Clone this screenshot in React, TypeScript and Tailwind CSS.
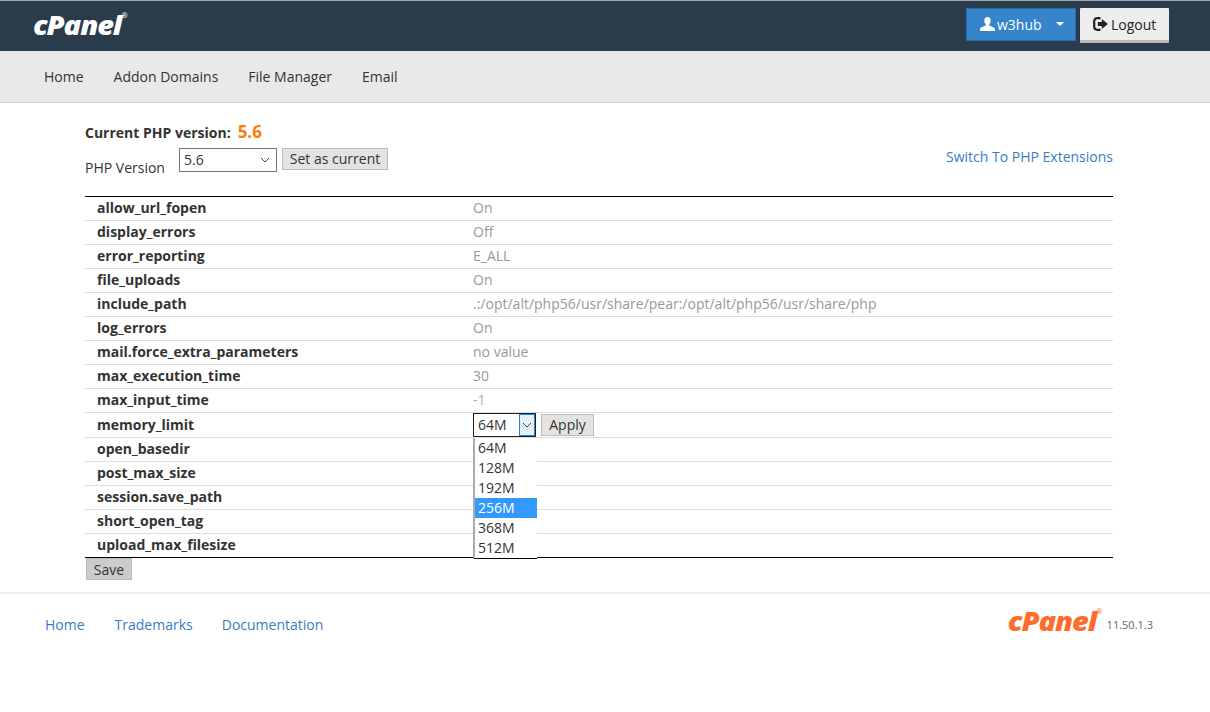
import React from 'react';

const settings = [
  { name: 'allow_url_fopen', value: 'On' },
  { name: 'display_errors', value: 'Off' },
  { name: 'error_reporting', value: 'E_ALL' },
  { name: 'file_uploads', value: 'On' },
  { name: 'include_path', value: '.:/opt/alt/php56/usr/share/pear:/opt/alt/php56/usr/share/php' },
  { name: 'log_errors', value: 'On' },
  { name: 'mail.force_extra_parameters', value: 'no value' },
  { name: 'max_execution_time', value: '30' },
  { name: 'max_input_time', value: '-1' },
  { name: 'memory_limit', value: '' },
  { name: 'open_basedir', value: '' },
  { name: 'post_max_size', value: '' },
  { name: 'session.save_path', value: '' },
  { name: 'short_open_tag', value: '' },
  { name: 'upload_max_filesize', value: '' },
];

const memoryOptions = ['64M', '128M', '192M', '256M', '368M', '512M'];

const Chevron: React.FC = () => (
  <svg width="10" height="6" viewBox="0 0 10 6" fill="none" stroke="#444" strokeWidth="1">
    <path d="M1 1l4 4 4-4" />
  </svg>
);

const UserIcon: React.FC = () => (
  <svg width="15" height="15" viewBox="0 0 15 15" fill="#fff">
    <path d="M7.500 0C5.400 0 4.300 1.500 4.300 3.600c0 1.500.6 3 1.500 3.900v1.100C4.200 9.500.3 10.300 0 12.200V14h15v-1.800c-.3-1.900-4.200-2.700-5.800-3.600V7.500c.9-.9 1.500-2.400 1.500-3.900C10.700 1.500 9.600 0 7.500 0z" />
  </svg>
);

const LogoutIcon: React.FC = () => (
  <svg width="15" height="14" viewBox="0 0 15 14" fill="none">
    <path d="M7.500 1.200H4.200C2.400 1.200 1.200 2.500 1.200 4.200v5.600c0 1.700 1.200 3 3 3h3.300" stroke="#222" strokeWidth="2.200" />
    <path d="M4.800 5h4V2L14.800 7l-6 5V9h-4z" fill="#222" />
  </svg>
);

const App: React.FC = () => {
  return (
    <div className="min-h-[712px] bg-white font-['Open_Sans',sans-serif] text-[14px] text-[#333]">
      <header className="flex h-[51px] items-center justify-between border-t border-[#aaa] bg-[#2a3b4c] pl-[33px] pr-[41px]">
        <span className="mt-[-2px] flex origin-left scale-x-[1.12] items-start text-[26px] leading-none font-extrabold tracking-[-1px] text-white italic">
          cPanel<span className="text-[7px] font-normal tracking-normal not-italic">®</span>
        </span>
        <div className="mt-[-2px] flex items-start gap-1">
          <button className="flex h-[33px] w-[110px] items-center gap-[2px] border border-[#2e6da4] bg-[#3584cc] pl-[13px] text-white">
            <UserIcon />
            <span>w3hub</span>
            <span className="ml-[12px] h-0 w-0 border-x-[4px] border-t-[4px] border-x-transparent border-t-white" />
          </button>
          <button className="flex h-[35px] w-[89px] items-center gap-[3px] rounded-[1px] border-b-[3px] border-[#bbb] bg-[#eee] pt-[1px] pl-[13px] text-[#222]">
            <LogoutIcon />
            <span>Logout</span>
          </button>
        </div>
      </header>

      <nav className="flex h-[52px] items-center gap-[30px] border-b border-[#ccc] bg-[#e9e9e9] pl-[44px]">
        <a>Home</a>
        <a>Addon Domains</a>
        <a>File Manager</a>
        <a>Email</a>
      </nav>

      <main className="mx-[85px] w-[1028px]">
        <div className="flex items-start justify-between">
          <div>
            <div className="mt-[17px] flex h-[24px] items-center gap-[7px]">
              <span className="font-bold">Current PHP version:</span>
              <span className="text-[17px] font-bold text-[#ff7c0a]">5.6</span>
            </div>
            <div className="mt-[4px] flex items-start">
              <span className="mt-[9px] w-[94px]">PHP Version</span>
              <div className="flex h-[24px] w-[98px] items-center justify-between border border-[#767676] pr-[6px] pl-[4px]">
                <span className="mb-[1px]">5.6</span>
                <Chevron />
              </div>
              <button className="ml-[5px] h-[22px] w-[106px] border border-[#bbb] bg-[#e3e3e3] leading-[20px]">
                Set as current
              </button>
            </div>
          </div>
          <a className="mt-[43px] text-[#3a7cc4]">Switch To PHP Extensions</a>
        </div>

        <div className="mt-[18px] border-y border-black">
          {settings.map((row, i) => (
            <div
              key={row.name}
              className={`flex items-center border-[#ddd] pl-[12px] ${i > 0 ? 'border-t' : ''} ${row.name === 'memory_limit' ? 'h-[25px]' : i === 0 ? 'h-[23px]' : 'h-[24px]'}`}
            >
              <span className="mb-[2px] w-[376px] font-bold">{row.name}</span>
              {row.name === 'memory_limit' ? (
                <div className="relative flex items-center">
                  <div className="flex h-[24px] w-[63px] items-stretch border border-[#222]">
                    <span className="flex-1 pl-[4px] leading-[22px]">64M</span>
                    <span className="flex w-[16px] items-center justify-center border border-[#2b7fd0] bg-[#e5f1fb]">
                      <Chevron />
                    </span>
                  </div>
                  <button className="ml-[5px] h-[22px] w-[53px] border border-[#bbb] bg-[#e3e3e3] leading-[18px]">
                    Apply
                  </button>
                  <ul className="absolute top-[25px] left-0 z-10 w-[64px] border-b border-l-2 border-b-black border-l-[#aaa] bg-white">
                    {memoryOptions.map((opt) => (
                      <li
                        key={opt}
                        className={`h-[20px] pl-[3px] leading-[20px] ${opt === '256M' ? 'bg-[#3399ff] text-white' : ''}`}
                      >
                        {opt}
                      </li>
                    ))}
                  </ul>
                </div>
              ) : (
                <span className={`mb-[2px] ${row.name === 'max_input_time' ? 'text-[#8fbf96]' : 'text-[#999]'}`}>
                  {row.value}
                </span>
              )}
            </div>
          ))}
        </div>
        <button className="ml-[1px] h-[22px] w-[46px] border border-[#bbb] bg-[#ccc]">Save</button>
      </main>

      <footer className="mt-[12px] flex h-[62px] items-center justify-between border-t-2 border-[#eee] pr-[57px] pl-[45px]">
        <div className="mb-[-1px] flex gap-[30px] text-[#3a7cc4]">
          <a>Home</a>
          <a className="mr-[-1px]">Trademarks</a>
          <a>Documentation</a>
        </div>
        <div className="mb-[7px] flex items-center gap-[4px]">
          <span className="flex origin-right scale-x-[1.12] items-start text-[26px] leading-none font-extrabold tracking-[-1px] text-[#ff6c2c] italic">
            cPanel<span className="text-[7px] font-normal tracking-normal not-italic">®</span>
          </span>
          <span className="mt-[9px] text-[11px] text-[#666]">11.50.1.3</span>
        </div>
      </footer>
    </div>
  );
};

export default App;
